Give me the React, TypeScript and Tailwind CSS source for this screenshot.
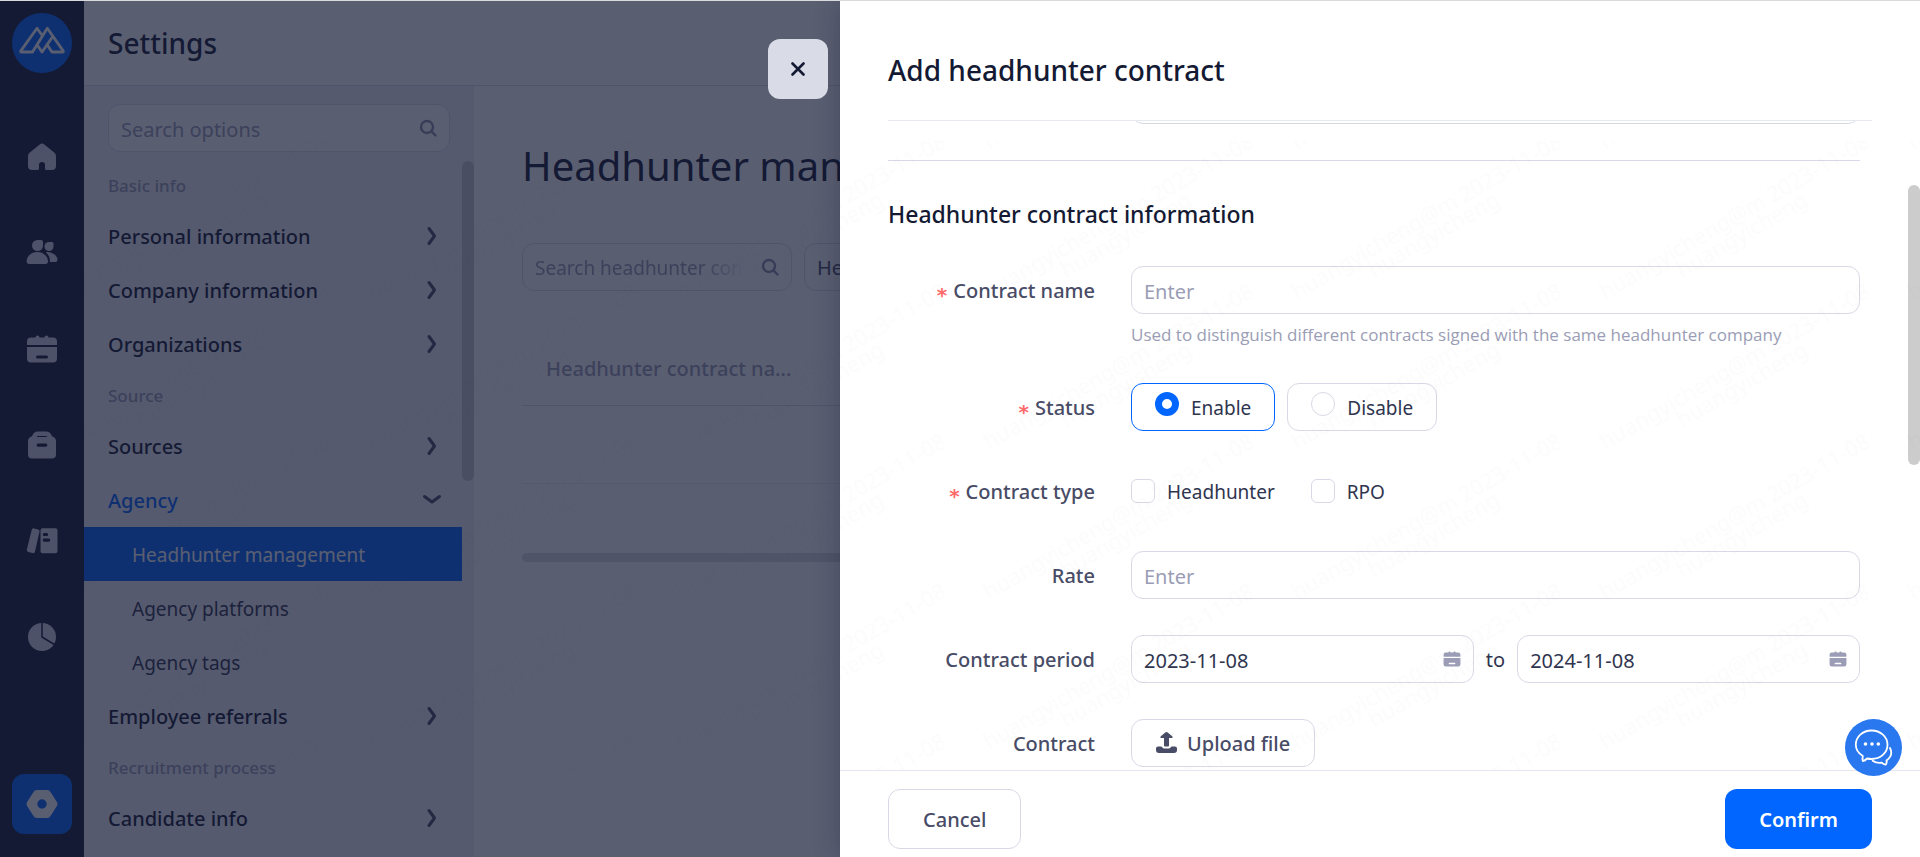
import { useState, type ReactNode } from "react";

type IconProps = { className?: string };

/* ---------- icons ---------- */

function LogoIcon() {
  return (
    <svg width="60" height="60" viewBox="0 0 60 60" fill="none">
      <circle cx="30" cy="30" r="30" fill="#0066ff" />
      <g stroke="#fff" strokeWidth="2.8" strokeLinejoin="round" strokeLinecap="round">
        <path d="M29.500 21.500 25 15.300 9 37.600q-1 1.400.6 1.400H20.500L35.300 15.300 51 37.600q1 1.400-.6 1.400H40l-5-7.500" />
        <path d="M25.200 32 30 39 40.800 23.500" />
      </g>
    </svg>
  );
}

function HomeIcon() {
  return (
    <svg width="32" height="32" viewBox="0 0 32 32" fill="currentColor">
      <path d="M13.400 3.700a4 4 0 0 1 5.200 0l9.600 7.800c1.200 1 1.800 2.300 1.800 3.800V25a4 4 0 0 1-4 4h-5.500a1.500 1.500 0 0 1-1.500-1.500V24a3 3 0 0 0-6 0v3.500a1.500 1.500 0 0 1-1.500 1.500H6a4 4 0 0 1-4-4v-9.700c0-1.500.6-2.800 1.800-3.800z" />
    </svg>
  );
}

function PeopleIcon() {
  return (
    <svg width="32" height="32" viewBox="0 0 32 32" fill="currentColor">
      <path d="M11.500 3H15a2 2 0 0 1 2 2v3.500A5.500 5.500 0 1 1 11.500 3z" />
      <path d="M23 5h3a1.500 1.500 0 0 1 1.500 1.500v3A4.500 4.500 0 1 1 23 5z" />
      <path d="M11.300 15C17.500 15 22 19.500 22 24.300A2.700 2.700 0 0 1 19.300 27H3.300A2.700 2.700 0 0 1 .6 24.300C.6 19.500 5 15 11.300 15z" />
      <path d="M21 15c6 0 10.500 3.800 10.500 7.800a2.200 2.200 0 0 1-2.200 2.200h-5.500c.5-4-1-7.200-4-9.400z" />
    </svg>
  );
}

function CalendarIcon({ className = "size-8" }: IconProps) {
  return (
    <svg className={className} viewBox="0 0 32 32" fill="currentColor">
      <path d="M9.500 4.500a2 2 0 0 1 4 0h5a2 2 0 0 1 4 0H27a4 4 0 0 1 4 4V12H1V8.500a4 4 0 0 1 4-4z" />
      <path d="M1 14h30v11.500a4 4 0 0 1-4 4H5a4 4 0 0 1-4-4zm10.500 8.500a1.500 1.500 0 0 0 0 3h9a1.500 1.500 0 0 0 0-3z" />
    </svg>
  );
}

function BagIcon() {
  return (
    <svg width="32" height="32" viewBox="0 0 32 32" fill="currentColor" fillRule="evenodd">
      <path d="M12 2.500h8c3 0 5.200 2 5.900 4.800C28.500 8 30 9.800 30 12v13.500a4 4 0 0 1-4 4H6a4 4 0 0 1-4-4V12c0-2.200 1.500-4 4.100-4.700C6.800 4.500 9 2.500 12 2.500zM10.500 8h11a3 3 0 0 0-1.500-1h-8a3 3 0 0 0-1.500 1zm1.700 6.500a1.600 1.600 0 0 0 0 3.200h7.600a1.600 1.600 0 0 0 0-3.200z" />
    </svg>
  );
}

function BooksIcon() {
  return (
    <svg width="32" height="32" viewBox="0 0 32 32" fill="currentColor" fillRule="evenodd">
      <path d="M8.200 3.400 12 4.400a2 2 0 0 1 1.500 2.400L9 26.600a2 2 0 0 1-2.400 1.500L2.300 27A2 2 0 0 1 .8 24.600L5.700 4.900a2 2 0 0 1 2.500-1.500z" />
      <path d="M16.500 3.300h13a2 2 0 0 1 2 2v21a2 2 0 0 1-2 2h-13a2 2 0 0 1-2-2v-21a2 2 0 0 1 2-2zm1.800 4.700a1.500 1.500 0 0 0 0 3h2.400a1.500 1.500 0 0 0 0-3zm0 5.500a1.500 1.500 0 0 0 0 3.200h4.400a1.500 1.500 0 0 0 0-3.200z" />
    </svg>
  );
}

function PieIcon() {
  return (
    <svg width="32" height="32" viewBox="0 0 32 32">
      <circle cx="16" cy="16" r="14" fill="currentColor" />
      <path d="M16 1v15l14 8.500" fill="none" stroke="#141a33" strokeWidth="1.500" />
    </svg>
  );
}

function HexIcon() {
  return (
    <svg width="32" height="32" viewBox="0 0 32 32" fill="currentColor" fillRule="evenodd">
      <path d="M11 2h10a4 4 0 0 1 3.500 2l6.400 10a4 4 0 0 1 0 4l-6.400 10a4 4 0 0 1-3.500 2H11a4 4 0 0 1-3.500-2L1.100 18a4 4 0 0 1 0-4L7.500 4A4 4 0 0 1 11 2zm5 9.300a4.700 4.700 0 1 0 0 9.400 4.700 4.700 0 0 0 0-9.400z" />
    </svg>
  );
}

function SearchIcon({ className }: IconProps) {
  return (
    <svg className={className} width="18" height="18" viewBox="0 0 18 18" fill="none" stroke="currentColor" strokeWidth="2.400" strokeLinecap="round">
      <circle cx="8" cy="8" r="6" />
      <path d="m12.500 12.500 4 4" />
    </svg>
  );
}

function Chevron({ open = false }: { open?: boolean }) {
  return (
    <svg width="24" height="24" viewBox="0 0 24 24" fill="none" stroke="#484c66" strokeWidth="3" strokeLinecap="round" strokeLinejoin="round">
      <path d={open ? "m4.500 8.500 7.500 5.500 7.500-5.500" : "m9 4.500 5.500 7.500L9 19.500"} />
    </svg>
  );
}

function UploadIcon() {
  return (
    <svg width="21" height="22" viewBox="0 0 21 22" fill="currentColor">
      <path d="M9 .8a2.200 2.200 0 0 1 3 0l4.200 3.500c.8.700.4 1.700-.6 1.700H13v7.500a1 1 0 0 1-1 1H9a1 1 0 0 1-1-1V6H5.400c-1 0-1.400-1-.6-1.700z" />
      <path d="M2 14.500h3c.7 0 1 .3 1.300.8.3.700.7 1.200 1.700 1.200h5c1 0 1.400-.5 1.700-1.200.3-.5.6-.8 1.300-.8h3a2 2 0 0 1 2 2V18a3 3 0 0 1-3 3H3a3 3 0 0 1-3-3v-1.500a2 2 0 0 1 2-2z" />
    </svg>
  );
}

function ChatIcon() {
  return (
    <svg width="57" height="57" viewBox="0 0 57 57" fill="none" stroke="#fff" strokeWidth="1.800" strokeLinejoin="round" strokeLinecap="round">
      <path d="M26.500 11.500c9 0 16 6.200 16 14.300s-7 14.200-16 14.200c-1.500 0-3-.2-4.300-.5-1.200 1.200-2.600 2.300-4.400 2.500-.6-1.700-.3-3.500 0-5-4.300-2.600-7-6.500-7-11.200 0-8.100 6.800-14.300 15.700-14.300z" />
      <path d="M45 29c2.300 4.600 1 9.300-3.500 12.500.3 1.500.3 3-.8 4.200-1.700-.2-3-.9-4-2-3.500.5-6.700-.2-9-2" />
      <g fill="#fff" stroke="none">
        <circle cx="20.500" cy="25" r="1.800" />
        <circle cx="27" cy="25" r="1.800" />
        <circle cx="33.300" cy="25" r="1.800" />
      </g>
    </svg>
  );
}

/* ---------- left rail + settings page ---------- */

const railItems = [
  { id: "home", icon: <HomeIcon /> },
  { id: "people", icon: <PeopleIcon /> },
  { id: "calendar", icon: <CalendarIcon /> },
  { id: "jobs", icon: <BagIcon /> },
  { id: "library", icon: <BooksIcon /> },
  { id: "reports", icon: <PieIcon /> },
];

function Rail() {
  return (
    <nav className="flex w-[84px] shrink-0 flex-col items-center bg-[#141a33] pt-3 pb-[23px] text-[#d5d7e2]">
      <a href="#home">
        <LogoIcon />
      </a>
      <div className="mt-[54px] flex flex-col gap-9">
        {railItems.map((item) => (
          <button key={item.id} className="flex size-[60px] items-center justify-center">
            {item.icon}
          </button>
        ))}
      </div>
      <button className="mt-auto flex size-[60px] items-center justify-center rounded-xl bg-[#0066ff] text-white">
        <HexIcon />
      </button>
    </nav>
  );
}

type MenuGroup = {
  title: string;
  items: { label: string; children?: string[] }[];
};

const menu: MenuGroup[] = [
  {
    title: "Basic info",
    items: [{ label: "Personal information" }, { label: "Company information" }, { label: "Organizations" }],
  },
  {
    title: "Source",
    items: [
      { label: "Sources" },
      { label: "Agency", children: ["Headhunter management", "Agency platforms", "Agency tags"] },
      { label: "Employee referrals" },
    ],
  },
  { title: "Recruitment process", items: [{ label: "Candidate info" }] },
];

function SettingsMenu() {
  return (
    <aside className="flex w-[390px] shrink-0 flex-col bg-[#f0f1f5] pt-[18px]">
      <label className="mr-6 ml-6 flex h-12 shrink-0 items-center rounded-xl border border-[#dcdde8] bg-white pr-3 pl-3">
        <input placeholder="Search options" className="h-full min-w-0 flex-1 pt-0.5 outline-none placeholder:text-[#9a9db5]" />
        <SearchIcon className="text-[#8a8ea8]" />
      </label>
      <div className="mt-[9px] flex min-h-0 flex-1">
        <div className="min-w-0 flex-1 overflow-hidden">
          {menu.map((group) => (
            <section key={group.title}>
              <h3 className="flex h-12 items-center pt-0.5 pl-6 text-[17px] font-medium text-[#9a9db5]">
                {group.title}
              </h3>
              {group.items.map((item) => (
                <div key={item.label}>
                  <button
                    className={
                      item.children
                        ? "flex h-[54px] w-full items-center justify-between pr-[18px] pl-6 font-medium text-[#0066ff]"
                        : "flex h-[54px] w-full items-center justify-between pr-[18px] pl-6 font-medium text-[#141a33]"
                    }
                  >
                    <span className="pt-0.5">{item.label}</span>
                    <Chevron open={!!item.children} />
                  </button>
                  {item.children?.map((child, i) => (
                    <a
                      key={child}
                      href="#agency"
                      className={
                        i === 0
                          ? "flex h-[54px] items-center bg-[#0066ff] pt-0.5 pl-12 text-[19px] text-white"
                          : "flex h-[54px] items-center pt-0.5 pl-12 text-[19px] text-[#30354f]"
                      }
                    >
                      {child}
                    </a>
                  ))}
                </div>
              ))}
            </section>
          ))}
        </div>
        <div className="h-80 w-3 rounded-full bg-[#c8c8cc]" />
      </div>
    </aside>
  );
}

function ManagementPage() {
  return (
    <main className="min-w-0 flex-1 overflow-hidden bg-white pt-[50px] pl-12">
      <h1 className="text-[40px] leading-[60px] whitespace-nowrap text-[#141a33]">Headhunter management</h1>
      <div className="mt-[47px] flex gap-3">
        <label className="flex h-12 w-[270px] items-center rounded-xl border border-[#dcdde8] pr-3 pl-3">
          <input
            placeholder="Search headhunter contract"
            className="mr-4 h-full min-w-0 flex-1 [mask-image:linear-gradient(to_right,black_80%,transparent)] pt-0.5 text-[19px] outline-none placeholder:text-[#9a9db5]"
          />
          <SearchIcon className="text-[#8a8ea8]" />
        </label>
        <select className="h-12 w-60 appearance-none rounded-xl border border-[#dcdde8] px-3 pt-0.5 text-[#484c66]">
          <option>Headhunter</option>
        </select>
      </div>
      <table className="mt-[41px] w-full">
        <thead>
          <tr className="h-[73px] border-b border-[#dcdde8] text-left text-[#9a9db5]">
            <th className="pt-0.5 pl-6 font-medium">Headhunter contract na...</th>
          </tr>
        </thead>
        <tbody>
          <tr className="h-[78px] border-b border-[#eeeff4]">
            <td />
          </tr>
        </tbody>
      </table>
      <div className="mt-[69px] h-[9px] rounded-full bg-[#dcdde4]" />
    </main>
  );
}

/* ---------- drawer ---------- */

const inputClass =
  "h-12 w-full rounded-xl border border-[#d8d9e6] bg-white px-3 pt-0.5 text-[#30354f] outline-none placeholder:text-[#9a9db5]";

function FormRow({
  label,
  htmlFor,
  required,
  children,
}: {
  label: string;
  htmlFor?: string;
  required?: boolean;
  children: ReactNode;
}) {
  return (
    <div className="flex items-start">
      <label
        htmlFor={htmlFor}
        className="flex h-12 w-[243px] shrink-0 items-center justify-end gap-1.5 pt-0.5 pr-9 font-medium text-[#484c66]"
      >
        {required && <span className="pt-2 font-['DejaVu_Sans',sans-serif] font-bold text-[#ff6b6b]">*</span>}
        {label}
      </label>
      <div className="min-w-0 flex-1">{children}</div>
    </div>
  );
}

function RadioCard({ label, checked, onSelect }: { label: string; checked: boolean; onSelect: () => void }) {
  return (
    <label
      className={
        checked
          ? "flex h-12 items-start gap-3 rounded-xl border border-[#0066ff] px-[23px] pt-2 text-[19px] text-[#30354f]"
          : "flex h-12 items-start gap-3 rounded-xl border border-[#d8d9e6] px-[23px] pt-2 text-[19px] text-[#30354f]"
      }
    >
      <input
        type="radio"
        name="status"
        checked={checked}
        onChange={onSelect}
        className="size-6 appearance-none rounded-full border border-[#d8d9e6] bg-white checked:border-[7px] checked:border-[#0066ff]"
      />
      <span className="leading-8">{label}</span>
    </label>
  );
}

function CheckItem({ label }: { label: string }) {
  return (
    <label className="flex items-center gap-3 text-[19px] text-[#30354f]">
      <input type="checkbox" className="size-6 appearance-none rounded-md border border-[#d8d9e6] bg-white" />
      <span className="pt-0.5">{label}</span>
    </label>
  );
}

function DateField({ id, value }: { id: string; value: string }) {
  return (
    <div className="flex h-12 min-w-0 flex-1 items-center rounded-xl border border-[#d8d9e6] bg-white px-3 text-[#30354f]">
      <input id={id} defaultValue={value} className="h-full min-w-0 flex-1 pt-0.5 outline-none" />
      <CalendarIcon className="size-[18px] text-[#9a9db5]" />
    </div>
  );
}

function ContractDrawer() {
  const [status, setStatus] = useState("Enable");

  return (
    <div className="absolute inset-y-0 right-0 flex w-[1080px] flex-col bg-white shadow-[0_0_24px_rgba(20,26,51,0.3)]">
      <button className="absolute top-[38px] -left-[72px] flex size-[60px] items-center justify-center rounded-xl bg-[#d9dbe6]">
        <svg width="14" height="14" viewBox="0 0 14 14" stroke="#141a33" strokeWidth="2.600" strokeLinecap="round">
          <path d="m1.500 1.500 11 11M12.500 1.500l-11 11" />
        </svg>
      </button>

      <header className="mx-12 flex h-[120px] shrink-0 items-center border-b border-[#e6e8f2] pt-[18px]">
        <h2 className="text-[28px] font-medium text-[#141a33]">Add headhunter contract</h2>
      </header>

      <div className="flex min-h-0 flex-1">
        <form className="min-w-0 flex-1 overflow-hidden pr-12 pl-12">
          {/* bottom edge of the field scrolled out above */}
          <div className="ml-[243px] flex h-[3px] items-end overflow-hidden">
            <div className="h-12 flex-1 shrink-0 rounded-xl border border-[#d8d9e6]" />
          </div>
          <hr className="mt-9 border-[#d8d9e6]" />
          <h3 className="mt-[37px] mb-9 text-[23px] leading-8 font-medium text-[#141a33]">
            Headhunter contract information
          </h3>

          <div className="flex flex-col gap-9">
            <FormRow label="Contract name" htmlFor="contract-name" required>
              <input id="contract-name" placeholder="Enter" className={inputClass} />
              <p className="pt-[9px] font-['Open_Sans',sans-serif] text-[17px] leading-6 text-[#9a9db5]">
                Used to distinguish different contracts signed with the same headhunter company
              </p>
            </FormRow>
            <FormRow label="Status" required>
              <div className="flex gap-3">
                <RadioCard label="Enable" checked={status === "Enable"} onSelect={() => setStatus("Enable")} />
                <RadioCard label="Disable" checked={status === "Disable"} onSelect={() => setStatus("Disable")} />
              </div>
            </FormRow>
            <FormRow label="Contract type" required>
              <div className="flex h-12 items-center gap-9">
                <CheckItem label="Headhunter" />
                <CheckItem label="RPO" />
              </div>
            </FormRow>
            <FormRow label="Rate" htmlFor="rate">
              <input id="rate" placeholder="Enter" className={inputClass} />
            </FormRow>
            <FormRow label="Contract period" htmlFor="period-start">
              <div className="flex items-center gap-3 text-[#30354f]">
                <DateField id="period-start" value="2023-11-08" />
                <label htmlFor="period-end" className="pt-0.5">
                  to
                </label>
                <DateField id="period-end" value="2024-11-08" />
              </div>
            </FormRow>
            <FormRow label="Contract">
              <button
                type="button"
                className="flex h-12 items-center gap-2.5 rounded-xl border border-[#d8d9e6] bg-white px-6 font-medium text-[#484c66]"
              >
                <UploadIcon />
                <span className="pt-0.5">Upload file</span>
              </button>
            </FormRow>
          </div>
        </form>
        <div className="mt-16 h-[280px] w-3 rounded-full bg-[#cccccc]" />
      </div>

      <footer className="flex shrink-0 justify-between border-t border-[#e3e6f0] px-12 pt-[18px] pb-2">
        <button className="h-[60px] rounded-xl border border-[#d8d9e6] px-[34px] pt-0.5 font-medium text-[#484c66]">
          Cancel
        </button>
        <button className="h-[60px] rounded-xl bg-[#0066ff] px-[34px] pt-0.5 font-semibold text-white">Confirm</button>
      </footer>

      <button className="absolute right-[18px] bottom-[81px] rounded-full bg-[#2a78f0]">
        <ChatIcon />
      </button>
    </div>
  );
}

function Watermark() {
  return (
    <div className="pointer-events-none absolute inset-x-0 top-[140px] bottom-[87px]">
      <svg className="size-full">
        <defs>
          <pattern id="watermark" x="20" y="9" width="308" height="150" patternUnits="userSpaceOnUse">
            {[0, 150, 300].map((dy) => (
              <g key={dy} fill="#000" fillOpacity="0.01" fontSize="22">
                <text transform={`translate(45 ${dy}) rotate(-30)`}>huangyicheng@m 2023-11-08</text>
                <text transform={`translate(122 ${dy - 22}) rotate(-30)`}>huangyicheng</text>
              </g>
            ))}
          </pattern>
        </defs>
        <rect width="100%" height="100%" fill="url(#watermark)" />
      </svg>
    </div>
  );
}

export default function App() {
  return (
    <div className="relative flex h-screen flex-col overflow-hidden border-t border-[#d8dadd] bg-white font-['Noto_Sans','Open_Sans',sans-serif] text-[20px]">
      <div className="flex min-h-0 flex-1">
        <Rail />
        <div className="flex min-w-0 flex-1 flex-col">
          <header className="flex h-[85px] shrink-0 items-center border-b border-[#dcdde8] px-6">
            <h2 className="text-[28px] font-medium text-[#141a33]">Settings</h2>
          </header>
          <div className="flex min-h-0 flex-1">
            <SettingsMenu />
            <ManagementPage />
          </div>
        </div>
      </div>
      <div className="absolute inset-0 bg-[#141a34]/70" />
      <ContractDrawer />
      <Watermark />
    </div>
  );
}
